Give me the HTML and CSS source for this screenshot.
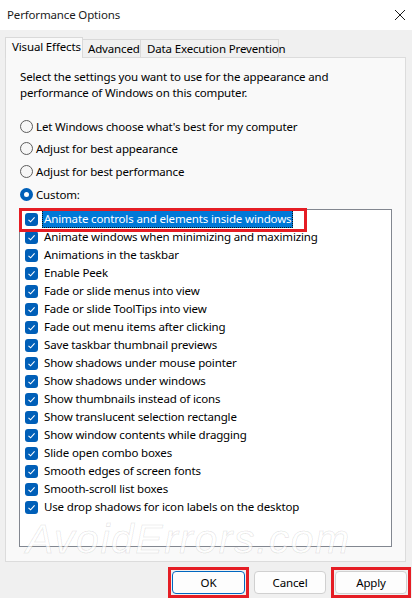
FILE: index.html
```html
<!DOCTYPE html>
<html>
<head>
<meta charset="utf-8">
<link rel="stylesheet" href="styles.css">
</head>
<body>
<div class="window">
  <div class="titlebar">
    <span class="title">Performance Options</span>
    <svg class="close" width="12" height="12" viewBox="0 0 12 12"><path d="M1 1 L11 11 M11 1 L1 11" stroke="#1b1b1b" stroke-width="1" fill="none"/></svg>
  </div>
  <div class="tabs">
    <div class="tab active">Visual Effects</div>
    <div class="tab">Advanced</div>
    <div class="tab">Data Execution Prevention</div>
  </div>
  <div class="panel">
    <p class="desc">Select the settings you want to use for the appearance and performance of Windows on this computer.</p>
    <div class="radios">
      <div class="radio-row"><span class="radio"></span>Let Windows choose what's best for my computer</div>
      <div class="radio-row"><span class="radio"></span>Adjust for best appearance</div>
      <div class="radio-row"><span class="radio"></span>Adjust for best performance</div>
      <div class="radio-row"><span class="radio on"></span>Custom:</div>
    </div>
    <div class="list">
      <div class="item first"><span class="cb"><svg width="13" height="13" viewBox="0 0 13 13"><path d="M3.5 6.8 L5.6 8.8 L9.6 4.4" stroke="#fff" stroke-width="1.1" fill="none"/></svg></span><span class="label sel">Animate controls and elements inside windows</span></div>
      <div class="item"><span class="cb"><svg width="13" height="13" viewBox="0 0 13 13"><path d="M3.5 6.8 L5.6 8.8 L9.6 4.4" stroke="#fff" stroke-width="1.1" fill="none"/></svg></span><span class="label">Animate windows when minimizing and maximizing</span></div>
      <div class="item"><span class="cb"><svg width="13" height="13" viewBox="0 0 13 13"><path d="M3.5 6.8 L5.6 8.8 L9.6 4.4" stroke="#fff" stroke-width="1.1" fill="none"/></svg></span><span class="label">Animations in the taskbar</span></div>
      <div class="item"><span class="cb"><svg width="13" height="13" viewBox="0 0 13 13"><path d="M3.5 6.8 L5.6 8.8 L9.6 4.4" stroke="#fff" stroke-width="1.1" fill="none"/></svg></span><span class="label">Enable Peek</span></div>
      <div class="item"><span class="cb"><svg width="13" height="13" viewBox="0 0 13 13"><path d="M3.5 6.8 L5.6 8.8 L9.6 4.4" stroke="#fff" stroke-width="1.1" fill="none"/></svg></span><span class="label">Fade or slide menus into view</span></div>
      <div class="item"><span class="cb"><svg width="13" height="13" viewBox="0 0 13 13"><path d="M3.5 6.8 L5.6 8.8 L9.6 4.4" stroke="#fff" stroke-width="1.1" fill="none"/></svg></span><span class="label">Fade or slide ToolTips into view</span></div>
      <div class="item"><span class="cb"><svg width="13" height="13" viewBox="0 0 13 13"><path d="M3.5 6.8 L5.6 8.8 L9.6 4.4" stroke="#fff" stroke-width="1.1" fill="none"/></svg></span><span class="label">Fade out menu items after clicking</span></div>
      <div class="item"><span class="cb"><svg width="13" height="13" viewBox="0 0 13 13"><path d="M3.5 6.8 L5.6 8.8 L9.6 4.4" stroke="#fff" stroke-width="1.1" fill="none"/></svg></span><span class="label">Save taskbar thumbnail previews</span></div>
      <div class="item"><span class="cb"><svg width="13" height="13" viewBox="0 0 13 13"><path d="M3.5 6.8 L5.6 8.8 L9.6 4.4" stroke="#fff" stroke-width="1.1" fill="none"/></svg></span><span class="label">Show shadows under mouse pointer</span></div>
      <div class="item"><span class="cb"><svg width="13" height="13" viewBox="0 0 13 13"><path d="M3.5 6.8 L5.6 8.8 L9.6 4.4" stroke="#fff" stroke-width="1.1" fill="none"/></svg></span><span class="label">Show shadows under windows</span></div>
      <div class="item"><span class="cb"><svg width="13" height="13" viewBox="0 0 13 13"><path d="M3.5 6.8 L5.6 8.8 L9.6 4.4" stroke="#fff" stroke-width="1.1" fill="none"/></svg></span><span class="label">Show thumbnails instead of icons</span></div>
      <div class="item"><span class="cb"><svg width="13" height="13" viewBox="0 0 13 13"><path d="M3.5 6.8 L5.6 8.8 L9.6 4.4" stroke="#fff" stroke-width="1.1" fill="none"/></svg></span><span class="label">Show translucent selection rectangle</span></div>
      <div class="item"><span class="cb"><svg width="13" height="13" viewBox="0 0 13 13"><path d="M3.5 6.8 L5.6 8.8 L9.6 4.4" stroke="#fff" stroke-width="1.1" fill="none"/></svg></span><span class="label">Show window contents while dragging</span></div>
      <div class="item"><span class="cb"><svg width="13" height="13" viewBox="0 0 13 13"><path d="M3.5 6.8 L5.6 8.8 L9.6 4.4" stroke="#fff" stroke-width="1.1" fill="none"/></svg></span><span class="label">Slide open combo boxes</span></div>
      <div class="item"><span class="cb"><svg width="13" height="13" viewBox="0 0 13 13"><path d="M3.5 6.8 L5.6 8.8 L9.6 4.4" stroke="#fff" stroke-width="1.1" fill="none"/></svg></span><span class="label">Smooth edges of screen fonts</span></div>
      <div class="item"><span class="cb"><svg width="13" height="13" viewBox="0 0 13 13"><path d="M3.5 6.8 L5.6 8.8 L9.6 4.4" stroke="#fff" stroke-width="1.1" fill="none"/></svg></span><span class="label">Smooth-scroll list boxes</span></div>
      <div class="item"><span class="cb"><svg width="13" height="13" viewBox="0 0 13 13"><path d="M3.5 6.8 L5.6 8.8 L9.6 4.4" stroke="#fff" stroke-width="1.1" fill="none"/></svg></span><span class="label">Use drop shadows for icon labels on the desktop</span></div>
      <div class="mark mark-item"></div>
    </div>
    <div class="watermark">AvoidErrors.com</div>
  </div>
  <div class="buttons">
    <button class="btn default marked">OK</button>
    <button class="btn">Cancel</button>
    <button class="btn marked">Apply</button>
  </div>
</div>
</body>
</html>
```
FILE: styles.css
```css
* { box-sizing: border-box; }
html, body { margin: 0; padding: 0; }
body {
  width: 412px;
  height: 598px;
  overflow: hidden;
  background: #f0f0f0;
  font-family: "Noto Sans", "Open Sans", sans-serif;
  font-size: 11.5px;
  letter-spacing: -0.15px;
  color: #000;
}
.window { width: 412px; height: 598px; display: flex; flex-direction: column; }
.titlebar {
  height: 30px;
  background: #fff;
  display: flex;
  align-items: center;
  justify-content: space-between;
  padding: 0 6px 2px 7px;
  flex: none;
}
.title { color: #1b1b1b; }
.close { margin-top: 2px; }
.tabs {
  display: flex;
  align-items: flex-end;
  padding-left: 5px;
  margin-top: 7px;
  height: 20px;
  position: relative;
  z-index: 2;
  flex: none;
}
.tab {
  height: 18px;
  border: 1px solid #d9d9d9;
  border-bottom: none;
  border-left: none;
  background: #f0f0f0;
  padding: 0 0 0 5px;
  line-height: 18px;
  white-space: nowrap;
}
.tab:nth-child(2) { width: 58px; }
.tab:nth-child(3) { width: 138px; padding-left: 6px; }
.tab.active {
  height: 21px;
  margin-bottom: -1px;
  width: 78px;
  border-left: 1px solid #d9d9d9;
  background: #f9f9f9;
  padding-left: 6px;
  line-height: 18px;
}
.panel {
  margin: 0 6px 0 5px;
  height: 505px;
  background: #f9f9f9;
  border: 1px solid #dcdcdc;
  padding: 11px 13px 0 14px;
  position: relative;
  flex: none;
}
.desc { margin: 0; line-height: 16px; width: 345px; }
.radios { margin-top: 14px; }
.radio-row {
  height: 22.6px;
  display: flex;
  align-items: center;
  white-space: nowrap;
}
.radio {
  width: 13px;
  height: 13px;
  border-radius: 50%;
  border: 1px solid #5d5d5d;
  background: #f6f6f6;
  margin-right: 3px;
  flex: none;
}
.radio.on {
  border: 4px solid #005fb8;
  background: #fff;
}
.list {
  margin-top: 4px;
  margin-left: -1px;
  width: 373px;
  height: 338px;
  border: 1px solid #828790;
  background: #fff;
  padding: 0 0 0 5px;
  position: relative;
}
.item {
  height: 18px;
  display: flex;
  align-items: center;
  white-space: nowrap;
}
.cb {
  width: 13px;
  height: 13px;
  border-radius: 3px;
  background: #005fb8;
  flex: none;
  margin-right: 4px;
  display: flex;
}
.label { padding: 0 1px; line-height: 16px; border: 1px solid transparent; }
.label.sel {
  background: #0078d7;
  color: #fff;
  border: 1px dotted #111;
}
.mark {
  position: absolute;
  border: 3px solid #e51d24;
  pointer-events: none;
}
.mark-item { left: -1px; top: -2px; width: 288px; height: 24px; }
.watermark {
  position: absolute;
  left: 20px;
  top: 458px;
  font-family: "Liberation Sans", sans-serif;
  font-size: 41px;
  font-style: italic;
  letter-spacing: 1.5px;
  color: rgba(255,255,255,0.7);
  -webkit-text-stroke: 1px rgba(0,0,0,0.09);
  pointer-events: none;
  white-space: nowrap;
}
.buttons {
  display: flex;
  justify-content: flex-end;
  gap: 9px;
  padding: 9px 5px 0 0;
}
.btn {
  position: relative;
  width: 73px;
  height: 23px;
  border: 1px solid #d0d0d0;
  border-radius: 4px;
  background: #fdfdfd;
  font-family: "Noto Sans", "Open Sans", sans-serif;
  font-size: 11.5px;
  letter-spacing: -0.15px;
  color: #000;
  padding: 0;
}
.btn:nth-child(2), .btn:nth-child(3) { width: 72px; }
.btn.default { border: 1px solid #0067c0; }
.btn.marked::after {
  content: "";
  position: absolute;
  left: -5px;
  top: -5px;
  right: -5px;
  bottom: -5px;
  border: 3px solid #e51d24;
}
```
